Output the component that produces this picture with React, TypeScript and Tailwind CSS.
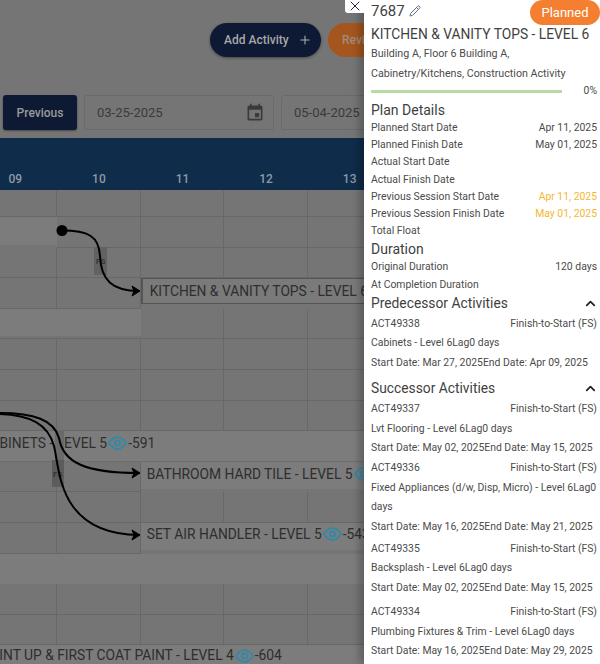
import { Plus, ChevronUp, Pencil, X } from "lucide-react";

const font = { fontFamily: '"Roboto", "Liberation Sans", sans-serif' };

function EyeMark() {
  return (
    <svg width="19" height="14" viewBox="0 0 19 14" fill="none" stroke="#2a8bab" strokeWidth="1.6" className="shrink-0">
      <path d="M1 7 C4 2.5 6.5 1 9.5 1 C12.5 1 15 2.5 18 7 C15 11.5 12.5 13 9.5 13 C6.5 13 4 11.5 1 7 Z" />
      <circle cx="9.5" cy="7" r="2.6" />
    </svg>
  );
}

function EventIcon() {
  return (
    <svg width="20" height="20" viewBox="0 0 24 24" fill="#3a3a3a" className="shrink-0">
      <path d="M17 12h-5v5h5v-5zM16 1v2H8V1H6v2H5c-1.11 0-1.99.9-1.99 2L3 19c0 1.1.89 2 2 2h14c1.1 0 2-.9 2-2V5c0-1.1-.9-2-2-2h-1V1h-2zm3 18H5V8h14v11z" />
    </svg>
  );
}

function Cell({ span = "col-span-1" }: { span?: string }) {
  return <div className={`${span} border-r border-b border-[#686868]`} />;
}

function Plain({ h }: { h: string }) {
  return (
    <div className={`grid grid-cols-[repeat(5,83.6px)] ${h}`}>
      <Cell /><Cell /><Cell /><Cell /><Cell />
    </div>
  );
}

function Detail({ label, value, tone }: { label: string; value?: string; tone?: boolean }) {
  return (
    <div className="flex justify-between h-[17.2px] leading-[17.2px] text-[10.4px] text-[#4b4b4b] whitespace-nowrap">
      <span>{label}</span>
      {value && <span className={tone ? "text-[#f5b731]" : ""}>{value}</span>}
    </div>
  );
}

function Activity({ id, name, dates, className = "" }: { id: string; name: string; dates: string; className?: string }) {
  return (
    <div className={`text-[10.4px] leading-[19.7px] text-[#4b4b4b] ${className}`}>
      <div className="flex justify-between">
        <span>{id}</span>
        <span>Finish-to-Start (FS)</span>
      </div>
      <div>{name}</div>
      <div className="whitespace-nowrap">{dates}</div>
    </div>
  );
}

export default function App() {
  return (
    <div className="flex w-[600px] h-[664px] overflow-hidden bg-white" style={font}>
      <div className="relative w-[364px] shrink-0 overflow-hidden bg-[#757575] flex flex-col">
        <div className="h-[95px] shrink-0 pt-[23px] pl-[210px] flex gap-[7px] w-[500px]">
          <div className="w-[111px] h-[34px] rounded-full bg-[#0e1a34] shadow-[0_1px_3px_rgba(0,0,0,0.4)] flex items-center pl-[14px] gap-[9px] text-[12px] font-medium text-[#a8a8a8] whitespace-nowrap">
            Add Activity
            <Plus size={14} strokeWidth={1.8} color="#b0b0b0" />
          </div>
          <div className="w-[110px] h-[34px] rounded-full bg-[#a5561f] pl-[14px] flex items-center text-[12px] font-medium text-[#a08a78]">
            Review
          </div>
        </div>
        <div className="h-[43px] shrink-0 flex gap-[7px] pl-[3px] w-[600px]">
          <div className="w-[74px] h-[35px] rounded-[3px] bg-[#0e1a34] shadow-[0_1px_2px_rgba(0,0,0,0.4)] flex items-center justify-center text-[12px] font-medium text-[#9a9a9a]">
            Previous
          </div>
          <div className="w-[190px] h-[35px] rounded-[3px] border border-[#6a6a6a] flex items-center justify-between pl-[12px] pr-[8px] text-[13px] text-[#3a3a3a]">
            03-25-2025
            <EventIcon />
          </div>
          <div className="w-[190px] h-[35px] rounded-[3px] border border-[#6a6a6a] flex items-center pl-[12px] text-[13px] text-[#3a3a3a]">
            05-04-2025
          </div>
        </div>
        <div className="h-[52px] shrink-0 bg-[#0f2c4a] ml-[-26.5px] w-[418px] grid grid-cols-[repeat(5,83.6px)] items-end pb-[2px] text-[12px] font-medium text-[#8a9aa8] text-center">
          <span>09</span><span>10</span><span>11</span><span>12</span><span>13</span>
        </div>

        <div className="ml-[-26.5px] w-[418px] flex-1 flex flex-col text-[#2e2e2e] text-[13.8px] whitespace-nowrap">
          <Plain h="h-[27px]" />
          <div className="grid grid-cols-[repeat(5,83.6px)] h-[30.6px]">
            <div className="bg-[#7c7c7c] h-[28px]" /><Cell /><Cell /><Cell /><Cell />
          </div>
          <Plain h="h-[30.6px]" />
          <div className="grid grid-cols-[repeat(5,83.6px)] h-[30.6px]">
            <Cell /><Cell />
            <div className="col-span-3 border-l-2 border-t border-b border-[#555] bg-[#7a7a7a] h-[26px] pl-[7px] flex items-center overflow-hidden">
              KITCHEN &amp; VANITY TOPS - LEVEL 6
            </div>
          </div>
          <div className="grid grid-cols-[repeat(5,83.6px)] h-[30.6px] border-b border-[#686868]">
            <div className="col-span-2 bg-[#7c7c7c] h-[27px]" />
            <div className="border-r border-[#686868]" /><div className="border-r border-[#686868]" /><div className="border-r border-[#686868]" />
          </div>
          <Plain h="h-[30.6px]" />
          <Plain h="h-[30.6px]" />
          <Plain h="h-[30.6px]" />
          <div className="h-[30.6px] bg-[#7c7c7c] border-b border-[#6e6e6e] pl-[8px] pb-[6px] flex items-center gap-[1px]">
            CABINETS - LEVEL 5<EyeMark />-591
          </div>
          <div className="grid grid-cols-[repeat(5,83.6px)] h-[30.6px]">
            <Cell /><Cell />
            <div className="col-span-3 bg-[#7c7c7c] h-[27px] pl-[6px] pb-[2px] flex items-center gap-[1px] overflow-hidden">
              BATHROOM HARD TILE - LEVEL 5<EyeMark />-561
            </div>
          </div>
          <Plain h="h-[30.6px]" />
          <div className="grid grid-cols-[repeat(5,83.6px)] h-[30.6px]">
            <Cell /><Cell />
            <div className="col-span-3 bg-[#7c7c7c] h-[27px] pl-[6px] pb-[4px] flex items-center gap-[1px] overflow-hidden">
              SET AIR HANDLER - LEVEL 5<EyeMark />-543
            </div>
          </div>
          <div className="h-[30.6px] bg-[#7c7c7c]" />
          <Plain h="h-[30.6px]" />
          <Plain h="h-[30.6px]" />
          <div className="flex-1 bg-[#7c7c7c] pl-[9px] flex items-center gap-[1px]">
            PAINT UP &amp; FIRST COAT PAINT - LEVEL 4<EyeMark />-604
          </div>
        </div>

        <svg className="absolute inset-0 pointer-events-none" width="364" height="664" fill="none">
          <rect x="94" y="247" width="13" height="28" fill="#626262" />
          <text x="96" y="264" fontSize="8" fill="#2e2e2e" fontWeight="500">FS</text>
          <rect x="55" y="430" width="9" height="30" fill="#6a6a6a" />
          <rect x="52" y="460" width="12" height="27" fill="#5c5c5c" />
          <text x="53" y="477" fontSize="8" fill="#2e2e2e" fontWeight="500">FS</text>
          <circle cx="62" cy="230.5" r="5.5" fill="#000" />
          <path d="M62 230.5 C 88 230.5 99 236 100 256 C 101 280 112 291 139 291" stroke="#000" strokeWidth="2" />
          <path d="M132 286 L140 291 L132 296 L134 291 Z" fill="#000" stroke="#000" strokeWidth="1" />
          <path d="M0 413 C 34 413 54 420 59 438 C 63 462 84 473 139 473" stroke="#000" strokeWidth="2" />
          <path d="M132 468 L140 473 L132 478 L134 473 Z" fill="#000" stroke="#000" strokeWidth="1" />
          <path d="M0 414 C 30 415 48 424 54 446 C 60 470 58 534 139 535" stroke="#000" strokeWidth="2" />
          <path d="M132 530 L140 535 L132 540 L134 535 Z" fill="#000" stroke="#000" strokeWidth="1" />
        </svg>
      </div>

      <div className="relative w-[236px] shrink-0 bg-white pl-[7px] pr-[3px] shadow-[-5px_0_7px_rgba(0,0,0,0.22)] text-[#3f3f3f]">
        <div className="absolute right-full top-0 w-[19px] h-[13px] bg-white rounded-bl-[3px] flex items-end justify-center overflow-hidden">
          <X size={16} strokeWidth={1.5} color="#1a2540" className="mb-[-1px]" />
        </div>
        <div className="flex justify-between h-[24px] mr-[-3px]">
          <div className="flex items-center gap-[4px] h-[22px] text-[15px] leading-none">
            7687
            <Pencil size={12} strokeWidth={2} color="#5a6a80" />
          </div>
          <div className="w-[70px] h-[25px] rounded-l-full rounded-r-full bg-[#f47f31] text-white text-[13px] flex items-center justify-center">
            Planned
          </div>
        </div>
        <div className="text-[13.8px] leading-[20px] whitespace-nowrap">KITCHEN &amp; VANITY TOPS - LEVEL 6</div>
        <div className="text-[10.7px] leading-[20px] text-[#4b4b4b]">Building A, Floor 6 Building A,</div>
        <div className="text-[10.7px] leading-[20px] text-[#4b4b4b] whitespace-nowrap">Cabinetry/Kitchens, Construction Activity</div>
        <div className="flex items-center justify-between h-[17px] pb-[3px] text-[10.4px] text-[#4b4b4b]">
          <div className="w-[191px] h-[3px] bg-[#b7dba2]" />
          <span>0%</span>
        </div>
        <div className="text-[14px] leading-[18px]">Plan Details</div>
        <Detail label="Planned Start Date" value="Apr 11, 2025" />
        <Detail label="Planned Finish Date" value="May 01, 2025" />
        <Detail label="Actual Start Date" />
        <Detail label="Actual Finish Date" />
        <Detail label="Previous Session Start Date" value="Apr 11, 2025" tone />
        <Detail label="Previous Session Finish Date" value="May 01, 2025" tone />
        <Detail label="Total Float" />
        <div className="text-[14px] leading-[18px] mt-[1px]">Duration</div>
        <Detail label="Original Duration" value="120 days" />
        <Detail label="At Completion Duration" />
        <div className="flex items-center justify-between h-[20px] mt-[1px] text-[13.8px]">
          Predecessor Activities
          <ChevronUp size={15} strokeWidth={2.8} color="#222" className="mr-[-1px]" />
        </div>
        <Activity id="ACT49338" name="Cabinets - Level 6Lag0 days" dates="Start Date: Mar 27, 2025End Date: Apr 09, 2025" />
        <div className="flex items-center justify-between h-[20px] mt-[6px] text-[13.8px]">
          Successor Activities
          <ChevronUp size={15} strokeWidth={2.8} color="#222" className="mr-[-1px]" />
        </div>
        <Activity id="ACT49337" name="Lvt Flooring - Level 6Lag0 days" dates="Start Date: May 02, 2025End Date: May 15, 2025" />
        <Activity id="ACT49336" name="Fixed Appliances (d/w, Disp, Micro) - Level 6Lag0 days" dates="Start Date: May 16, 2025End Date: May 21, 2025" />
        <Activity className="mt-[2px]" id="ACT49335" name="Backsplash - Level 6Lag0 days" dates="Start Date: May 02, 2025End Date: May 15, 2025" />
        <Activity className="mt-[4px]" id="ACT49334" name="Plumbing Fixtures & Trim - Level 6Lag0 days" dates="Start Date: May 16, 2025End Date: May 29, 2025" />
      </div>
    </div>
  );
}
